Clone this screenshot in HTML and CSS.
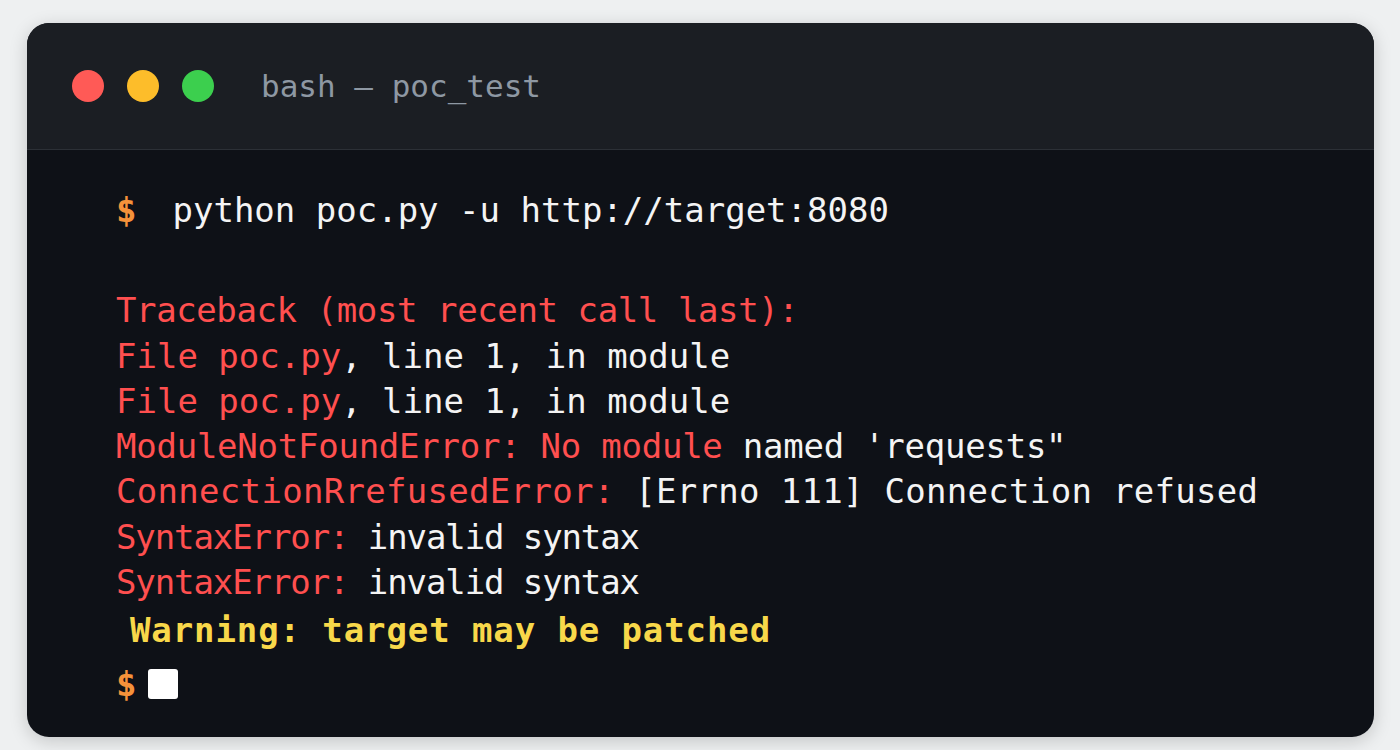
FILE: index.html
```html
<!DOCTYPE html>
<html lang="en">
<head>
<meta charset="utf-8">
<title>bash — poc_test</title>
<link rel="stylesheet" href="styles.css">
</head>
<body>
<div class="window">
  <div class="titlebar">
    <div class="lights">
      <span class="light red"></span>
      <span class="light yellow"></span>
      <span class="light green"></span>
    </div>
    <div class="title">bash — poc_test</div>
  </div>
  <div class="term">
    <div class="line cmd"><span class="prompt">$</span><span class="w">python poc.py -u http://target:8080</span></div>
    <div class="line tb"><span class="r">Traceback (most recent call last):</span></div>
    <div class="line"><span class="r">File poc.py</span><span class="w">, line 1, in module</span></div>
    <div class="line"><span class="r">File poc.py</span><span class="w">, line 1, in module</span></div>
    <div class="line mod"><span class="r">ModuleNotFoundError: No module</span><span class="w"> named 'requests"</span></div>
    <div class="line conn"><span class="r">ConnectionRrefusedError:</span><span class="w"> [Errno 111] Connection refused</span></div>
    <div class="line syn"><span class="r">SyntaxError:</span><span class="w"> invalid syntax</span></div>
    <div class="line syn"><span class="r">SyntaxError:</span><span class="w"> invalid syntax</span></div>
    <div class="line warn"><span class="y">Warning: target may be patched</span></div>
    <div class="line last"><span class="prompt2">$</span><span class="cursor"></span></div>
  </div>
</div>
</body>
</html>
```
FILE: styles.css
```css
html, body {
  margin: 0;
  padding: 0;
}
body {
  background: #eef0f1;
  width: 1400px;
  height: 750px;
  overflow: hidden;
  font-family: "DejaVu Sans Mono", "Liberation Mono", monospace;
}
.window {
  margin: 23px 0 0 27px;
  width: 1347px;
  height: 714px;
  border-radius: 22px;
  overflow: hidden;
  background: #0e1117;
  box-shadow: 0 4px 18px rgba(0, 0, 0, 0.18);
  display: flex;
  flex-direction: column;
}
.titlebar {
  height: 126px;
  background: #1b1e23;
  border-bottom: 1px solid #2c3036;
  display: flex;
  align-items: center;
  padding-left: 45px;
  flex-shrink: 0;
}
.lights {
  display: flex;
  gap: 23px;
}
.light {
  width: 32px;
  height: 32px;
  border-radius: 50%;
  display: block;
}
.red { background: #ff5a56; }
.yellow { background: #fdbd2a; }
.green { background: #3ccf4e; }
.title {
  margin-left: 47px;
  font-size: 31px;
  color: #8e98a3;
}
.term {
  padding: 38px 0 0 89px;
  font-size: 34px;
  color: #f2f2f2;
}
.line {
  height: 45.3px;
  line-height: 45.3px;
  white-space: pre;
}
.cmd {
  margin-bottom: 55px;
  display: flex;
  align-items: center;
}
.prompt {
  color: #f5923a;
  font-weight: bold;
  margin-right: 36px;
}
.r { color: #ff4f4f; }
.w { color: #f4f4f4; }
.y { color: #f8d84a; font-weight: bold; }
.tb { letter-spacing: -0.4px; }
.mod { letter-spacing: -0.25px; }
.conn { letter-spacing: 0.3px; }
.syn { letter-spacing: -1.1px; }
.warn {
  margin-top: 3px;
  padding-left: 14px;
  letter-spacing: 0.9px;
}
.last {
  margin-top: 8px;
  display: flex;
  align-items: center;
}
.prompt2 {
  color: #f5923a;
  font-weight: bold;
  margin-right: 12px;
}
.cursor {
  width: 30px;
  height: 30px;
  background: #ffffff;
  border-radius: 3px;
  display: block;
}
```
